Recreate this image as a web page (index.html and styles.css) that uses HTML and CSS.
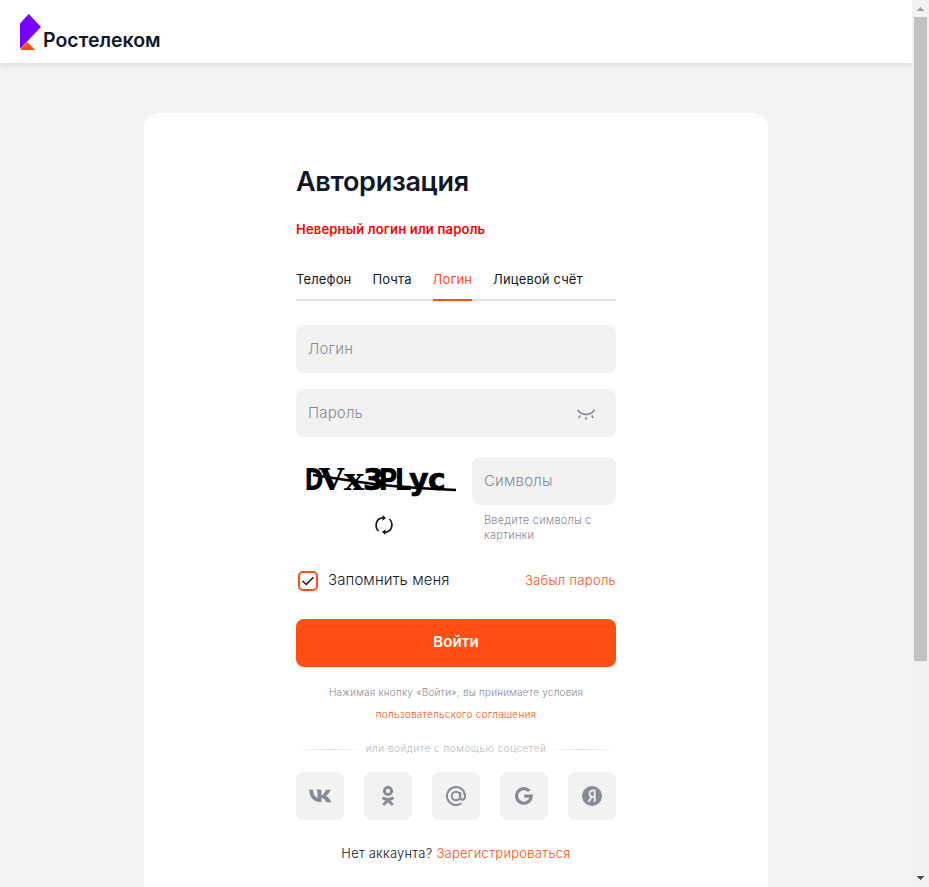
FILE: index.html
```
<!DOCTYPE html>
<html lang="ru">
<head>
<meta charset="utf-8">
<title>Ростелеком</title>
<link rel="stylesheet" href="styles.css">
</head>
<body>
<div class="page">
  <header class="header">
    <svg class="logo" width="21" height="36" viewBox="0 0 21 36"><path fill="#7700ff" d="M0 9.500 8.700 0 21 13 0 35z"/><path fill="#ff4f12" d="M1 36V34.600L7 28 15.500 36z"/></svg>
    <span class="brand">Ростелеком</span>
  </header>
  <main class="card">
    <form class="form">
      <h1 class="title">Авторизация</h1>
      <p class="error">Неверный логин или пароль</p>
      <nav class="tabs">
        <span class="tab">Телефон</span>
        <span class="tab">Почта</span>
        <span class="tab active">Логин</span>
        <span class="tab">Лицевой счёт</span>
      </nav>
      <div class="field"><span>Логин</span></div>
      <div class="field"><span>Пароль</span>
        <svg class="eye" width="18" height="12" viewBox="0 0 18 12" fill="none" stroke="#878b94" stroke-width="1.600"><path d="M.5.700C4.700 6.900 13.300 6.900 17.500.700M3.200 6.500 1.800 9M9 8v3M14.800 6.500 16.200 9"/></svg>
      </div>
      <div class="captcha">
        <div class="captcha-left">
          <svg width="160" height="48" viewBox="0 0 160 48" class="captcha-image">
            <g font-weight="700">
              <text x="8.500" y="32.500" font-family="DejaVu Sans" font-size="30" textLength="19" lengthAdjust="spacingAndGlyphs">D</text>
              <text x="23" y="32.500" font-family="DejaVu Serif" font-size="30" textLength="25" lengthAdjust="spacingAndGlyphs">V</text>
              <text x="48" y="32.500" font-family="DejaVu Serif" font-size="30" textLength="20" lengthAdjust="spacingAndGlyphs">x</text>
              <text x="67" y="32.500" font-family="DejaVu Sans" font-size="30" textLength="21" lengthAdjust="spacingAndGlyphs" stroke="#000" stroke-width=".6">3</text>
              <text x="82.500" y="32.500" font-family="DejaVu Sans" font-size="30" textLength="19" lengthAdjust="spacingAndGlyphs">P</text>
              <text x="98.500" y="32.500" font-family="DejaVu Sans" font-size="30" textLength="17" lengthAdjust="spacingAndGlyphs">L</text>
              <text x="113" y="32.500" font-family="DejaVu Sans" font-size="30" stroke="#000" stroke-width=".6">y</text>
              <text x="132" y="32.500" font-family="DejaVu Sans" font-size="30" stroke="#000" stroke-width=".6">c</text>
            </g>
            <path d="M17 18C60 24 80 30 160 33" fill="none" stroke="#000" stroke-width="2.500"/>
          </svg>
          <svg class="refresh" width="20" height="20" viewBox="0 0 20 20" fill="none" stroke="#101828" stroke-width="1.700"><path d="M4.600 16C.3 12 1.600 3 9 2.900M15.400 4C19.700 8 18.400 17 11 17.100"/><path d="M8.500 0v5.800L12 2.900zM11.500 20v-5.800L8 17.100z" fill="#101828" stroke="none"/></svg>
        </div>
        <div class="captcha-right">
          <div class="field"><span>Символы</span></div>
          <p class="hint">Введите символы с<br>картинки</p>
        </div>
      </div>
      <div class="options">
        <span class="checkbox"><svg width="14" height="12" viewBox="0 0 14 12" fill="none" stroke="#101828" stroke-width="1.600"><path d="M1.500 6 5.200 9.500 12.500 2.300"/></svg></span>
        <span class="remember">Запомнить меня</span>
        <a class="forgot">Забыл пароль</a>
      </div>
      <div class="submit"><span>Войти</span></div>
      <p class="terms"><span>Нажимая кнопку «Войти», вы принимаете условия</span><br><a>пользовательского соглашения</a></p>
      <div class="divider"><i></i><span>или войдите с помощью соцсетей</span><i></i></div>
      <div class="socials">
        <span class="social"><svg width="22" height="14" viewBox="0 0 22 14" fill="#878b94"><path d="M12 13.200C4.500 13.200.4 8.500.2.800H4c.1 5.200 2.600 7.500 4.500 8V3.200C8.500 2 8 1.600 7.300 1.200 7.800.8 8.800.6 10.300.6c1.800 0 2.200.3 2.200 1.700v3.900c1.700-.2 3.400-2.500 4.400-5.400h4.600c-.7 2.800-2.800 5-4.300 6 1.700.9 3.900 3 4.800 6.400h-4.700c-.8-2.300-2.500-4-4.800-4.300v4.300z"/></svg></span>
        <span class="social"><svg width="14" height="20" viewBox="0 0 14 20" fill="none" stroke="#878b94" stroke-width="2.900"><circle cx="7" cy="5" r="3.600"/><path d="M1.500 11.700c3.300 2 7.700 2 11 0M2.200 19 7 14.200 11.800 19" /></svg></span>
        <span class="social"><svg width="20" height="20" viewBox="0 0 20 20" fill="none" stroke="#878b94" stroke-width="2"><circle cx="10" cy="10" r="4.200"/><path d="M14.200 6v5.200c0 3.800 4.800 3.300 4.800-1.200a9 9 0 1 0-3.700 7.300"/></svg></span>
        <span class="social"><svg width="18" height="18" viewBox="0 0 18 18" fill="none" stroke="#878b94" stroke-width="3.200"><path d="M14.300 4A7.300 7.300 0 1 0 16.200 9.200H9.200"/></svg></span>
        <span class="social"><svg width="20" height="20" viewBox="0 0 20 20"><circle cx="10" cy="10" r="10" fill="#878b94"/><path d="M12.700 16V4.300h-1.500C8.900 4.300 7.600 5.700 7.600 7.600c0 2 1.300 3.300 3.500 3.300h1.600M9.900 10.500 6.500 16" fill="none" stroke="#f2f2f2" stroke-width="1.800"/></svg></span>
      </div>
      <p class="register"><span>Нет аккаунта?</span><a>Зарегистрироваться</a></p>
    </form>
  </main>
</div>
<aside class="scrollbar">
  <svg width="17" height="17" shape-rendering="crispEdges"><path d="M5 11 8.500 7 12 11z" fill="#a3a3a3"/></svg>
  <div class="thumb"></div>
  <svg class="down" width="17" height="17" shape-rendering="crispEdges"><path d="M5 6 8.500 10 12 6z" fill="#505050"/></svg>
</aside>
</body>
</html>
```
FILE: styles.css
```
* { box-sizing: border-box; }
body { margin: 0; display: flex; height: 887px; overflow: hidden; background: #f3f3f4; color: #101828; font-family: Inter, "Liberation Sans", sans-serif; }
p, h1 { margin: 0; }
svg { display: block; }
span, a { white-space: nowrap; }
.page { width: 912px; height: 887px; overflow: hidden; }
.header { display: flex; height: 63px; padding: 14px 20px 0; background: #fff; box-shadow: 0 1px 6px rgba(16, 24, 40, .14); }
.brand { margin: 14px 0 0 2px; font-size: 19.5px; line-height: 24px; font-weight: 600; }
.card { width: 624px; height: 800px; margin: 50px auto 0; padding: 51px 152px 0; border-radius: 16px; background: #fff; }
.title { font-size: 27px; line-height: 36px; font-weight: 600; letter-spacing: -.3px; }
.error { margin-top: 19px; font-size: 13px; line-height: 20px; font-weight: 600; letter-spacing: .2px; color: #f00; }
.tabs { display: flex; gap: 21px; height: 32px; margin: 30px 0 24px; box-shadow: inset 0 -2px #e5e5e5; font-size: 13px; line-height: 21px; letter-spacing: .14px; }
.tab.active { color: #ff4f12; border-bottom: 2px solid #ff4f12; }
.field { display: flex; align-items: center; justify-content: space-between; height: 48px; margin-bottom: 16px; padding: 0 12px; border-radius: 8px; background: #f2f2f2; color: #878b94; font-size: 15px; font-weight: 300; letter-spacing: .16px; }
.field span { padding-bottom: 2px; }
.eye { margin: 4px 9px 0 0; }
.captcha { display: flex; gap: 16px; margin-top: 20px; height: 86px; }
.captcha-left { width: 160px; }
.refresh { margin: 10px 0 0 78px; }
.captcha-right { flex: 1; }
.captcha-right .field { margin-bottom: 8px; }
.hint { padding-left: 12px; color: #878b94; font-size: 11px; font-weight: 300; line-height: 15px; letter-spacing: .22px; }
.options { display: flex; align-items: center; height: 20px; margin: 28px 0; padding-left: 2px; }
.checkbox { display: flex; align-items: center; justify-content: center; width: 20px; height: 20px; border: 2px solid #ff4f12; border-radius: 5px; }
.remember { margin: -3px auto 0 10px; font-size: 15px; font-weight: 300; letter-spacing: .1px; }
.forgot { margin-top: -2px; font-size: 13px; font-weight: 300; letter-spacing: .3px; }
.forgot, .terms a, .register a { color: #ff4f12; }
.submit { display: flex; justify-content: center; height: 48px; padding-top: 13px; border-radius: 8px; background: #ff4f12; color: #fff; font-size: 15px; line-height: 20px; font-weight: 600; letter-spacing: .15px; }
.terms { margin-top: 14px; text-align: center; font-size: 10px; line-height: 22px; font-weight: 300; letter-spacing: .2px; color: #878b94; }
.terms a { letter-spacing: .26px; }
.divider { display: flex; align-items: center; gap: 4px; height: 20px; margin: 14px 0 13px; padding: 0 2px; font-size: 10px; font-weight: 300; letter-spacing: .5px; color: #b5b8be; }
.divider span { padding-bottom: 2px; }
.divider i { flex: 1; height: 1px; background: linear-gradient(90deg, transparent, #ddd, transparent); }
.socials { display: flex; justify-content: space-between; }
.social { display: flex; align-items: center; justify-content: center; width: 48px; height: 48px; border-radius: 8px; background: #f2f2f2; }
.register { display: flex; justify-content: center; gap: 4px; margin-top: 23px; font-size: 13px; line-height: 20px; font-weight: 300; letter-spacing: .2px; }
.register a { letter-spacing: .26px; }
.scrollbar { display: flex; flex-direction: column; width: 17px; height: 887px; background: #f1f1f1; }
.thumb { width: 13px; height: 644px; margin: 0 2px; background: #c1c1c1; }
.down { margin-top: auto; }
```
